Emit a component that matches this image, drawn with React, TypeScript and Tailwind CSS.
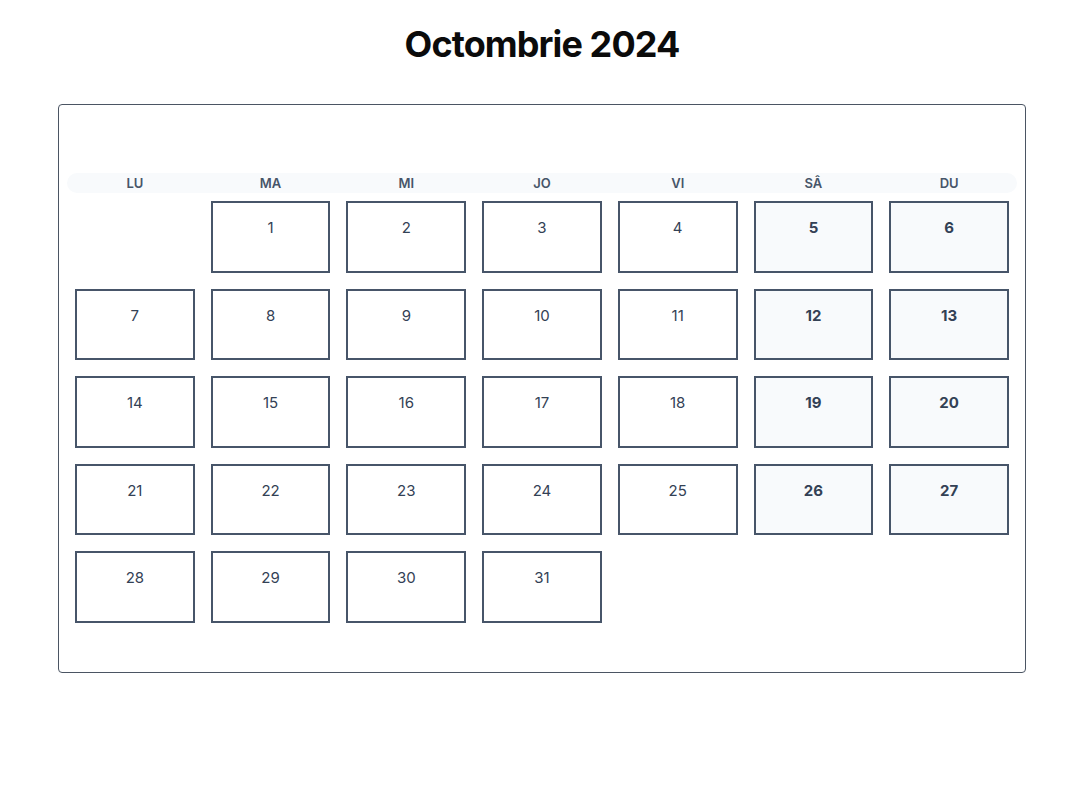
import React from 'react';

const DAYS = ['LU', 'MA', 'MI', 'JO', 'VI', 'SÂ', 'DU'];

// Oct 1 2024 is a Tuesday, so one empty slot first
const cells: (number | null)[] = [null, ...Array.from({ length: 31 }, (_, i) => i + 1)];

export default function App() {
    return (
        <div className="min-h-screen bg-white px-[58px] pt-[22px]" style={{ fontFamily: 'Inter, "Noto Sans", sans-serif' }}>
            <h1 className="text-center text-[36px] font-bold leading-[44px] tracking-[-0.025em] text-[#0b0b0b]">
                Octombrie 2024
            </h1>

            <div className="mt-[38px] rounded-[4px] border border-[#4b5563] px-2 pt-[68px] pb-[41px]">
                <div className="grid grid-cols-7 rounded-full bg-[#f8fafc]">
                    {DAYS.map(d => (
                        <div key={d} className="h-5 text-center text-[13px] font-semibold leading-5 text-[#475569]">
                            {d}
                        </div>
                    ))}
                </div>

                <div className="grid grid-cols-7">
                    {cells.map((n, i) => {
                        const weekend = i % 7 >= 5;
                        return (
                            <div key={i} className="p-2">
                                {n === null ? (
                                    <div className="h-[71.5px]" />
                                ) : (
                                    <div
                                        className={`h-[71.5px] border-2 border-[#475569] pt-[13px] text-center text-[15px] leading-6 text-[#334155] ${weekend ? 'bg-[#f8fafc] font-bold text-[#1e293b]' : ''}`}
                                    >
                                        {n}
                                    </div>
                                )}
                            </div>
                        );
                    })}
                </div>
            </div>
        </div>
    );
}
